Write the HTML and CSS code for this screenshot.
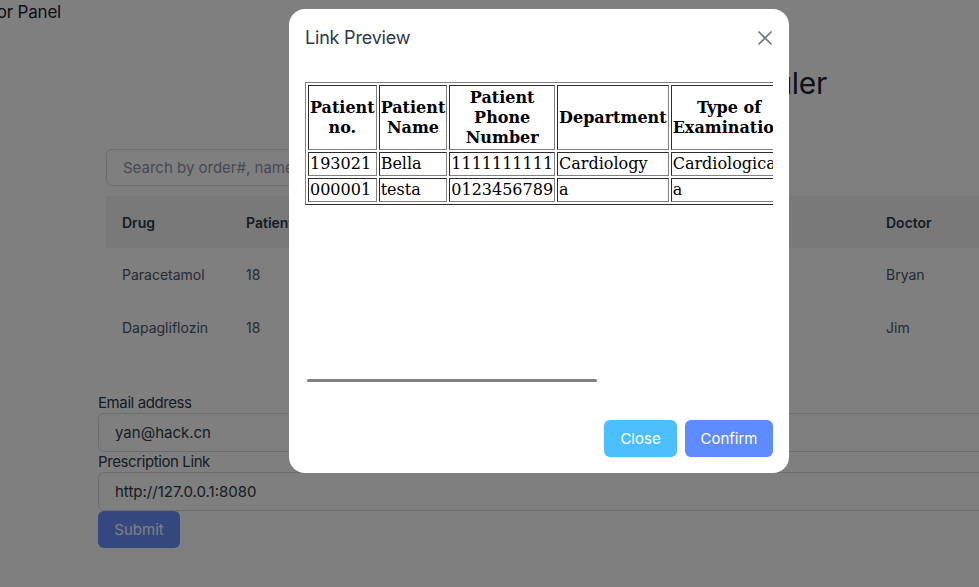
FILE: index.html
```html
<!DOCTYPE html>
<html>
<head>
<meta charset="utf-8">
<title>Doctor Panel</title>
<link rel="stylesheet" href="styles.css">
</head>
<body>
<div class="page">
  <nav class="navbar"><span class="brand">Doctor Panel</span></nav>
  <h1 class="title">Prescription Scheduler</h1>
  <div class="search-row"><input class="search" type="text" placeholder="Search by order#, name..."></div>
  <table class="orders">
    <thead>
      <tr><th class="c1">Drug</th><th class="c2">Patient ID</th><th class="c3">Dosage</th><th class="c3">Frequency</th><th class="c3">Time</th><th class="c4">Doctor</th></tr>
    </thead>
    <tbody>
      <tr><td>Paracetamol</td><td>18</td><td>500mg</td><td>Daily</td><td>9:00</td><td>Bryan</td></tr>
      <tr><td>Dapagliflozin</td><td>18</td><td>10mg</td><td>Daily</td><td>8:00</td><td>Jim</td></tr>
    </tbody>
  </table>
  <form class="form">
    <label class="label">Email address</label>
    <input class="field" type="text" value="yan@hack.cn">
    <label class="label">Prescription Link</label>
    <input class="field" type="text" value="http://127.0.0.1:8080">
    <button class="submit" type="button">Submit</button>
  </form>
</div>

<div class="overlay"></div>
<div class="modal">
  <header class="modal-header">
    <span class="modal-title">Link Preview</span>
    <button class="modal-x" type="button" aria-label="Close">
      <svg width="16" height="16" viewBox="0 0 16 16"><path d="M1.5 1.5 L14.5 14.5 M14.5 1.5 L1.5 14.5" stroke="#6b7280" stroke-width="1.6" fill="none"/></svg>
    </button>
  </header>
  <div class="modal-body">
    <div class="frame">
      <table class="preview">
        <tr><th>Patient no.</th><th>Patient Name</th><th>Patient Phone Number</th><th>Department</th><th>Type of Examination</th><th>Examination Date</th><th>Doctor</th></tr>
        <tr><td>193021</td><td>Bella</td><td>1111111111</td><td>Cardiology</td><td>Cardiological</td><td>2023-05-12</td><td>Bryan</td></tr>
        <tr><td>000001</td><td>testa</td><td>0123456789</td><td>a</td><td>a</td><td>a</td><td>a</td></tr>
      </table>
      <div class="thumb"></div>
    </div>
  </div>
  <footer class="modal-footer">
    <button class="btn btn-close" type="button">Close</button>
    <button class="btn btn-confirm" type="button">Confirm</button>
  </footer>
</div>
</body>
</html>
```

FILE: styles.css
```css
html, body {
  margin: 0;
  padding: 0;
  overflow: hidden;
  background: #ffffff;
  font-family: Inter, "Open Sans", sans-serif;
  color: #1a202c;
}

.page {
  width: 979px;
  height: 587px;
}

.navbar {
  height: 24px;
  display: flex;
  align-items: center;
}

.brand {
  margin-left: -40px;
  font-size: 17px;
  line-height: 24px;
  color: #1a202c;
  letter-spacing: -0.2px;
}

.title {
  margin: 41px 0 0 0;
  font-size: 30px;
  line-height: 36px;
  font-weight: 400;
  text-align: right;
  padding-right: 152px;
  color: #1a202c;
  letter-spacing: -0.3px;
}

.search-row {
  margin-top: 48px;
  padding-left: 106px;
}

.search {
  box-sizing: border-box;
  width: 320px;
  height: 37px;
  border: 1px solid #d5dae2;
  border-radius: 6px;
  padding: 0 16px;
  font-family: inherit;
  font-size: 15px;
  color: #1a202c;
  background: #ffffff;
}

.search::placeholder {
  color: #8a94a6;
}

.orders {
  margin: 10px 0 0 106px;
  border-collapse: collapse;
  width: 940px;
  font-size: 14px;
}

.orders thead tr {
  background: #f2f3f5;
}

.orders th {
  height: 52px;
  text-align: left;
  padding: 0 16px;
  font-weight: 600;
  color: #2d3748;
}

.orders td {
  height: 53px;
  padding: 0 16px;
  color: #4a5568;
}

.orders .c1, .orders .c2 { width: 92px; }
.orders .c3 { width: 140px; }

.form {
  margin: 39px 0 0 98px;
  display: flex;
  flex-direction: column;
  align-items: flex-start;
}

.label {
  font-size: 15px;
  line-height: 20px;
  color: #2d3748;
  letter-spacing: -0.4px;
}

.field {
  box-sizing: border-box;
  width: 920px;
  height: 39px;
  border: 1px solid #d5dae2;
  border-radius: 6px;
  padding: 0 16px;
  font-family: inherit;
  font-size: 15px;
  color: #2d3748;
  background: #ffffff;
}

.submit {
  margin-top: 0;
  width: 82px;
  height: 37px;
  border: none;
  border-radius: 6px;
  background: #6890ff;
  color: #ffffff;
  font-family: inherit;
  font-size: 15px;
}

.overlay {
  position: fixed;
  inset: 0;
  background: rgba(0, 0, 0, 0.5);
}

.modal {
  position: fixed;
  left: 289px;
  top: 9px;
  width: 500px;
  height: 464px;
  background: #ffffff;
  border-radius: 16px;
  display: flex;
  flex-direction: column;
}

.modal-header {
  padding: 16px;
  display: flex;
  align-items: center;
  justify-content: space-between;
}

.modal-title {
  font-size: 18px;
  line-height: 26px;
  color: #2d3748;
  letter-spacing: -0.2px;
}

.modal-x {
  border: none;
  background: none;
  padding: 0;
  width: 16px;
  height: 16px;
  display: flex;
}

.modal-body {
  padding: 15px 16px 0 16px;
}

.frame {
  position: relative;
  width: 468px;
  height: 302px;
  overflow: hidden;
}

.preview {
  font-family: "DejaVu Serif", serif;
  font-size: 16px;
  line-height: 20px;
  color: #000000;
  border: 1px outset #808080;
  border-spacing: 2px;
}

.preview th, .preview td {
  border: 1px inset #808080;
  padding: 1px;
}

.preview th {
  font-weight: bold;
  text-align: center;
  padding: 2px 1px 1px 1px;
}

.preview td {
  text-align: left;
}

.thumb {
  position: absolute;
  left: 2px;
  bottom: 2px;
  width: 290px;
  height: 3px;
  border-radius: 2px;
  background: #808080;
}

.modal-footer {
  margin-top: auto;
  padding: 0 16px 16px 16px;
  display: flex;
  justify-content: flex-end;
  gap: 8px;
}

.btn {
  height: 37px;
  border: none;
  border-radius: 6px;
  color: #ffffff;
  font-family: inherit;
  font-size: 15px;
}

.btn-close {
  width: 73px;
  background: #4cbfff;
}

.btn-confirm {
  width: 88px;
  background: #5e8bff;
}
```
